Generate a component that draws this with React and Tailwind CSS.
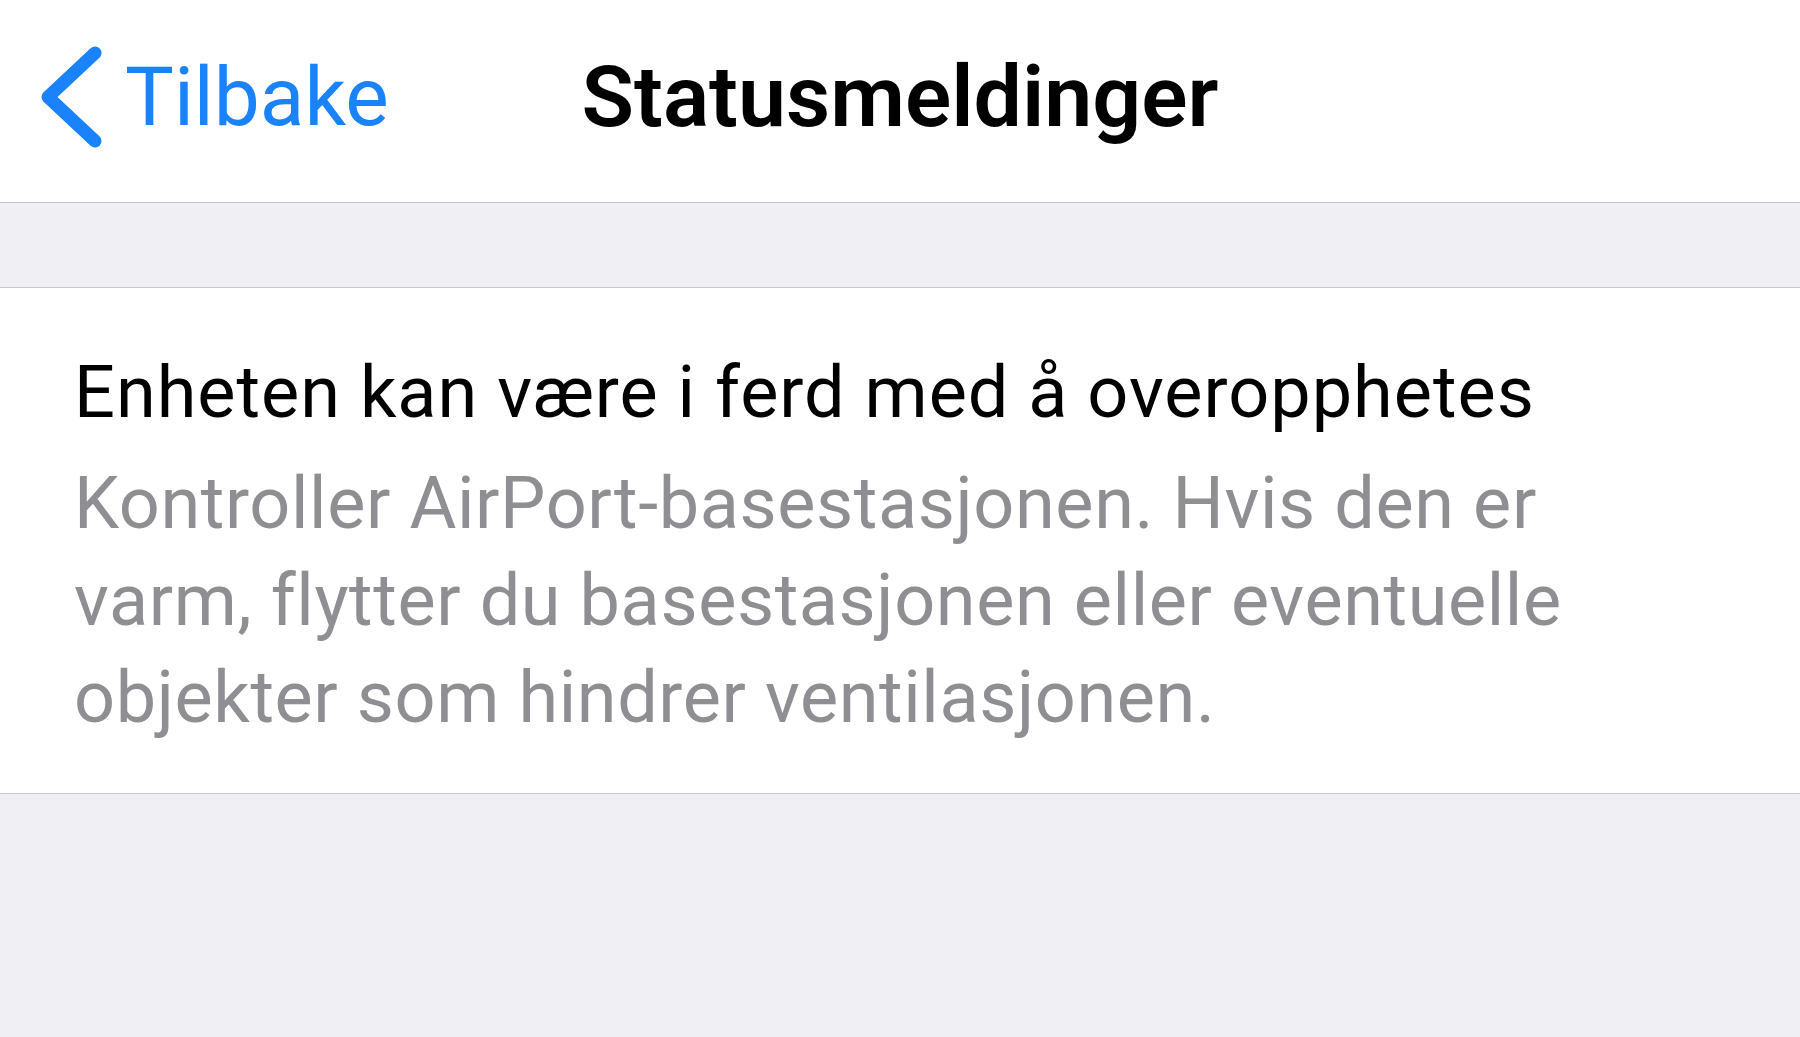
import React from 'react';

const BackChevron = () => (
  <svg width="64" height="108" viewBox="0 0 64 108" fill="none" stroke="currentColor">
    <polyline points="57,10 10,54 57,98" strokeWidth={13} strokeLinecap="round" strokeLinejoin="round" />
  </svg>
);

const App = () => {
  return (
    <div className="min-h-screen h-[1037px] flex flex-col bg-[#efeff4] font-['Roboto','Liberation_Sans',sans-serif]">
      <header className="h-[203px] shrink-0 bg-white border-b border-[#c8c7cc] grid grid-cols-[1fr_auto_1fr] items-center pb-[8px]">
        <button className="flex items-center text-[#1a82fb] pl-[38px] justify-self-start">
          <BackChevron />
          <span className="ml-[23px] text-[82px] leading-none">Tilbake</span>
        </button>
        <h1 className="text-[86px] font-semibold leading-none text-black">Statusmeldinger</h1>
        <div />
      </header>

      <div className="h-[85px] shrink-0 border-b border-[#c8c7cc]" />

      <section className="h-[506px] shrink-0 bg-white border-b border-[#c8c7cc] pl-[74px] pr-[80px] pt-[62px]">
        <h2 className="text-[72px] leading-[86px] tracking-[1px] text-black">Enheten kan være i ferd med å overopphetes</h2>
        <p className="mt-[19px] max-w-[1530px] text-[72px] leading-[97px] tracking-[0.6px] text-[#8e8e93]">
          Kontroller AirPort-basestasjonen. Hvis den er varm, flytter du basestasjonen eller eventuelle objekter som hindrer ventilasjonen.
        </p>
      </section>

      <div className="flex-1" />
    </div>
  );
};

export default App;
